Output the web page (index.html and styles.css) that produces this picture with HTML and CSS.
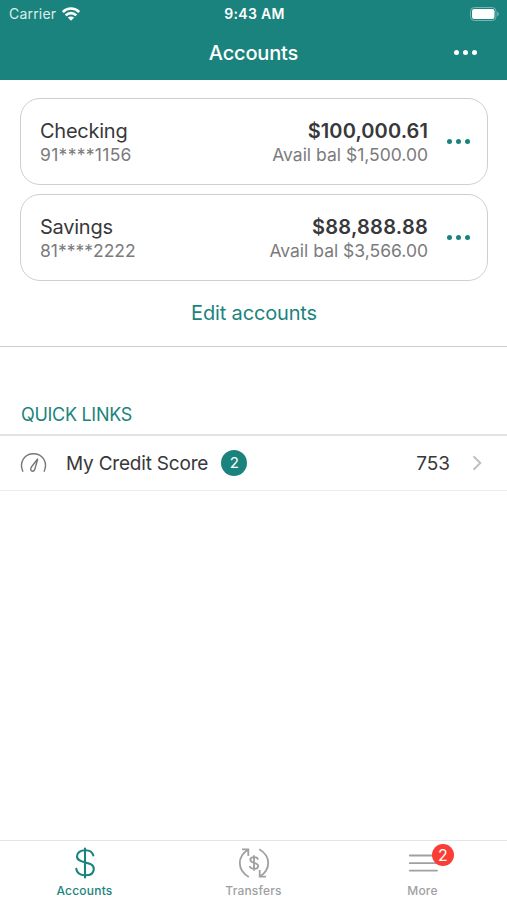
FILE: index.html
```html
<!DOCTYPE html>
<html lang="en">
<head>
    <meta charset="UTF-8">
    <meta name="viewport" content="width=device-width, initial-scale=1.0">
    <title>Accounts</title>
    <link rel="stylesheet" href="styles.css">
</head>
<body>

    <header class="header">
        <div class="status-bar">
            <div class="carrier">
                <span class="carrier-name">Carrier</span>
                <svg width="18" height="14" viewBox="0 0 18 14" fill="none" stroke="#fff" stroke-width="2.6">
                    <path d="M0.800 5C5.400 0.400 12.600 0.400 17.200 5"/>
                    <path d="M3.700 8.400C6.700 5.400 11.300 5.400 14.300 8.400"/>
                    <path d="M9 13.800L5.800 10.600C7.600 9 10.400 9 12.200 10.600Z" fill="#fff" stroke="none"/>
                </svg>
            </div>
            <span class="time">9:43 AM</span>
            <svg class="battery" width="30" height="14" viewBox="0 0 30 14">
                <rect x="0.5" y="0.5" width="25.5" height="13" rx="3.8" fill="none" stroke="#76b5b1"/>
                <rect x="2" y="2" width="22.5" height="10" rx="2.2" fill="#fff"/>
                <path d="M27.3 4.8C29.4 5.6 29.4 8.4 27.3 9.2Z" fill="#76b5b1"/>
            </svg>
        </div>
        <div class="nav-bar">
            <h1 class="title">Accounts</h1>
            <button type="button" class="dots dots-white"><i></i><i></i><i></i></button>
        </div>
    </header>

    <main class="content">
        <section class="accounts">
            <div class="card">
                <div class="account">
                    <div class="account-name">Checking</div>
                    <div class="account-number number-checking">91****1156</div>
                </div>
                <div class="balance">
                    <div class="amount">$100,000.61</div>
                    <div class="available">Avail bal $1,500.00</div>
                </div>
                <button type="button" class="dots"><i></i><i></i><i></i></button>
            </div>
            <div class="card">
                <div class="account">
                    <div class="account-name">Savings</div>
                    <div class="account-number">81****2222</div>
                </div>
                <div class="balance">
                    <div class="amount amount-savings">$88,888.88</div>
                    <div class="available">Avail bal $3,566.00</div>
                </div>
                <button type="button" class="dots"><i></i><i></i><i></i></button>
            </div>
            <a class="edit-link">Edit accounts</a>
        </section>

        <h2 class="section-title">QUICK LINKS</h2>
        <div class="link-row">
            <svg class="gauge" width="28" height="22" viewBox="0 0 28 22" fill="none" stroke="#777" stroke-width="1.4" stroke-linecap="round">
                <path d="M2.800 19.200C-1.200 10 4.500 1.800 13.500 1.800S28.200 10 24.200 19.200"/>
                <path d="M17.800 6.700L11.600 14.800C9.800 17.200 11 19.200 12.600 19.200C14.300 19.200 14.900 17.600 15.200 15.800Z"/>
            </svg>
            <span class="link-name">My Credit Score</span>
            <span class="badge">2</span>
            <span class="score">753</span>
            <svg class="chevron" width="10" height="16" viewBox="0 0 10 16" fill="none" stroke="#c0c0c2" stroke-width="2">
                <path d="M1.500 1.200L8.300 8L1.500 14.800"/>
            </svg>
        </div>
    </main>

    <nav class="tab-bar">
        <a class="tab active">
            <svg width="32" height="32" viewBox="0 0 32 32" fill="none" stroke="currentColor" stroke-width="2.1" stroke-linecap="round">
                <path d="M16 1.500V30.500"/>
                <path d="M24.300 8.500C23.500 5.200 20.500 3.300 16.300 3.300C11.500 3.300 8 5.500 8 9.200C8 17.500 24.800 13.300 24.800 21.900C24.800 26 21.300 28.200 16.300 28.200C11 28.200 7.800 25.800 7.300 21.800"/>
            </svg>
            <span>Accounts</span>
        </a>
        <a class="tab">
            <svg width="32" height="32" viewBox="0 0 32 32" fill="none" stroke="currentColor" stroke-width="1.8">
                <path d="M10.800 30C-1.200 23 -0.800 9.500 9.700 3M4 2.400H10.300V9"/>
                <path d="M21.200 2.200C33.200 9.200 32.800 22.500 22.300 29.200M21.700 23V29.600H28"/>
                <path d="M16 8.200V23.800M20 12.700C19.600 9.200 12.300 9.200 12.300 12.800C12.300 16.700 20.200 14.800 20.200 19C20.200 22.700 12.200 22.700 11.800 19"/>
            </svg>
            <span>Transfers</span>
        </a>
        <a class="tab">
            <svg width="32" height="32" viewBox="0 0 32 32" stroke="currentColor" stroke-width="1.8" stroke-linecap="round">
                <path d="M2.800 8.500H30M2.800 16.200H30M2.800 23.600H30"/>
            </svg>
            <span>More</span>
            <b class="tab-badge">2</b>
        </a>
    </nav>

</body>
</html>
```

FILE: styles.css
```css
* {
    box-sizing: border-box;
}
body {
    font-family: Inter, "Liberation Sans", sans-serif;
    background-color: #fff;
    color: #38383a;
    margin: 0;
    height: 900px;
    display: flex;
    flex-direction: column;
    overflow: hidden;
}
svg {
    display: block;
    flex: none;
}
.header {
    height: 80px;
    background: #1b837d;
    color: #fff;
}
.status-bar {
    display: grid;
    grid-template-columns: 1fr auto 1fr;
    align-items: center;
    height: 27px;
    padding: 0 7px 0 9px;
    font-size: 14px;
}
.carrier {
    display: flex;
    align-items: center;
    gap: 6px;
}
.carrier-name {
    letter-spacing: 0.2px;
    color: #dceeec;
}
.time {
    font-weight: 600;
    letter-spacing: 0.3px;
}
.battery {
    justify-self: end;
}
.nav-bar {
    display: grid;
    grid-template-columns: 1fr auto 1fr;
    align-items: center;
    height: 51px;
    padding: 0 30px;
}
.title {
    grid-column: 2;
    margin: 0;
    font-size: 20px;
    font-weight: 500;
    letter-spacing: -0.15px;
}
.dots {
    display: flex;
    gap: 4px;
    padding: 0;
    border: none;
    background: none;
    color: #1b837d;
    cursor: pointer;
}
.dots i {
    width: 5px;
    height: 5px;
    border-radius: 50%;
    background: currentColor;
}
.dots-white {
    justify-self: end;
    color: #fff;
}
.content {
    flex: 1;
}
.accounts {
    display: flex;
    flex-direction: column;
    gap: 9px;
    height: 267px;
    padding: 18px 19px 0 20px;
    border-bottom: 1px solid #cbcbcd;
}
.card {
    display: flex;
    align-items: center;
    height: 87px;
    padding: 0 17px 0 19px;
    border: 1px solid #cfcfcf;
    border-radius: 20px;
}
.account {
    flex: 1;
    padding-top: 2px;
}
.account-name, .amount {
    font-size: 20px;
    line-height: 24px;
}
.account-name {
    letter-spacing: -0.25px;
}
.account-number, .available {
    font-size: 17.5px;
    line-height: 23px;
    color: #7b7b7d;
}
.number-checking {
    letter-spacing: 0.3px;
}
.balance {
    margin-right: 19px;
    padding-top: 2px;
    text-align: right;
}
.amount {
    font-weight: 600;
    letter-spacing: 0.1px;
}
.amount-savings {
    letter-spacing: 0.25px;
}
.edit-link {
    padding-top: 10px;
    font-size: 20px;
    line-height: 26px;
    letter-spacing: -0.15px;
    text-align: center;
    color: #1b837d;
}
.section-title {
    height: 89px;
    margin: 0;
    padding: 56px 21px 0;
    border-bottom: 2px solid #e3e3e3;
    font-size: 18px;
    font-weight: 400;
    line-height: 24px;
    letter-spacing: -0.3px;
    color: #1b837d;
}
.link-row {
    display: flex;
    align-items: center;
    height: 55px;
    padding: 0 25px 0 20px;
    border-bottom: 1px solid #ececec;
    font-size: 19px;
}
.link-name {
    margin: 0 13px 0 18px;
    letter-spacing: -0.2px;
}
.badge {
    width: 26px;
    height: 26px;
    border-radius: 50%;
    background: #1b837d;
    color: #fff;
    font-size: 15px;
    line-height: 26px;
    text-align: center;
}
.score {
    margin-left: auto;
    margin-right: 22px;
}
.tab-bar {
    display: grid;
    grid-template-columns: repeat(3, 1fr);
    height: 60px;
    border-top: 1px solid #e4e4e4;
}
.tab {
    position: relative;
    display: flex;
    flex-direction: column;
    align-items: center;
    padding-top: 6px;
    font-size: 12px;
    font-weight: 500;
    line-height: 16px;
    letter-spacing: 0.2px;
    color: #a0a0a2;
}
.tab span {
    margin-top: 4px;
}
.tab.active {
    color: #1b837d;
}
.tab-badge {
    position: absolute;
    top: 3px;
    left: 94px;
    width: 22px;
    height: 22px;
    border-radius: 50%;
    background: #fa3e36;
    color: #fff;
    font-size: 16px;
    font-weight: 400;
    line-height: 22px;
    letter-spacing: 0;
    text-align: center;
}
```
